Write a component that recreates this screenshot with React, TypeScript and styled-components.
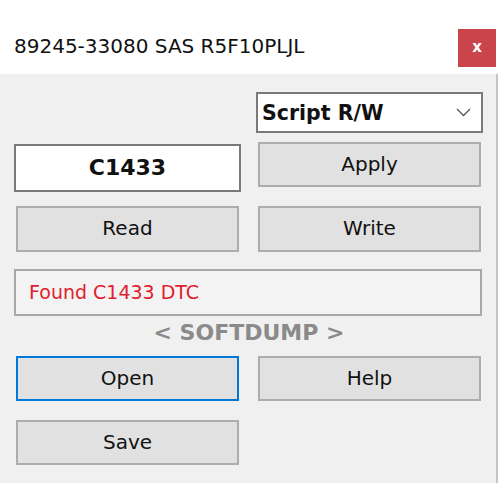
import styled, { createGlobalStyle } from 'styled-components';

const GlobalStyle = createGlobalStyle`
    html, body {
        margin: 0;
        padding: 0;
        background: #ffffff;
    }
    body {
        font-family: 'DejaVu Sans', 'Liberation Sans', sans-serif;
    }
`;

const Window = styled.div`
    width: 498px;
    background: #ffffff;
`;

const TitleBar = styled.div`
    height: 74px;
    display: flex;
    align-items: flex-start;
    justify-content: space-between;
    padding: 29px 2px 0 14px;
    box-sizing: border-box;
`;

const Title = styled.span`
    font-size: 20px;
    color: #111;
    margin-top: 5px;
`;

const CloseButton = styled.button`
    width: 38px;
    height: 38px;
    border: none;
    padding: 0 0 2px;
    background: #c9454b;
    color: #ffffff;
    font-family: 'DejaVu Sans', sans-serif;
    font-weight: bold;
    font-size: 15px;
    display: flex;
    align-items: center;
    justify-content: center;
`;

const Body = styled.div`
    background: #f0f0f0;
    border-right: 2px solid #c4c4c4;
    padding: 0 13px 18px 14px;
    display: flex;
    flex-direction: column;
`;

const Row = styled.div<{ $mt: number }>`
    display: grid;
    grid-template-columns: 227px 227px;
    column-gap: 15px;
    align-items: start;
    margin-top: ${({ $mt }) => $mt}px;
`;

const Button = styled.button<{ $focused?: boolean }>`
    height: 45px;
    margin: 0 2px;
    box-sizing: border-box;
    background: #e1e1e1;
    border: 2px solid ${({ $focused }) => ($focused ? '#0078d7' : '#adadad')};
    font-family: 'DejaVu Sans', sans-serif;
    font-size: 20px;
    color: #111;
    padding: 0 0 2px;
`;

const TallButton = styled(Button)`
    height: 46px;
`;

const Select = styled.div`
    grid-column: 2;
    height: 41px;
    box-sizing: border-box;
    background: #ffffff;
    border: 2px solid #7a7a7a;
    display: flex;
    align-items: center;
    justify-content: space-between;
    padding: 0 10px 0 4px;
    font-weight: bold;
    font-size: 20.5px;
    color: #111;
`;

const CodeInput = styled.div`
    height: 48px;
    margin-top: 2px;
    box-sizing: border-box;
    background: #ffffff;
    border: 2px solid #7a7a7a;
    display: flex;
    align-items: center;
    justify-content: center;
    font-weight: bold;
    font-size: 22px;
    color: #111;
    padding-bottom: 2px;
`;

const Status = styled.div`
    grid-column: 1 / 3;
    width: 468px;
    height: 47px;
    box-sizing: border-box;
    background: #f3f3f3;
    border: 2px solid #a8a8a8;
    display: flex;
    align-items: center;
    padding: 0 0 2px 13px;
    font-size: 19px;
    color: #e0202e;
`;

const Caption = styled.div<{ $mt: number }>`
    margin-top: ${({ $mt }) => $mt}px;
    width: 470px;
    text-align: center;
    font-weight: bold;
    font-size: 22px;
    line-height: 24px;
    color: #8a8a8a;
`;

const Chevron = () => (
    <svg width="15" height="9" viewBox="0 0 15 9">
        <polyline points="1,1 7.5,7.5 14,1" fill="none" stroke="#555" strokeWidth="1.3" />
    </svg>
);

const App = () => {
    return (
        <>
            <GlobalStyle />
            <Window>
                <TitleBar>
                    <Title>89245-33080 SAS R5F10PLJL</Title>
                    <CloseButton>x</CloseButton>
                </TitleBar>
                <Body>
                    <Row $mt={18}>
                        <Select>
                            <span>Script R/W</span>
                            <Chevron />
                        </Select>
                    </Row>
                    <Row $mt={9}>
                        <CodeInput>C1433</CodeInput>
                        <Button>Apply</Button>
                    </Row>
                    <Row $mt={14}>
                        <TallButton>Read</TallButton>
                        <TallButton>Write</TallButton>
                    </Row>
                    <Row $mt={17}>
                        <Status>Found C1433 DTC</Status>
                    </Row>
                    <Caption $mt={5}>&lt; SOFTDUMP &gt;</Caption>
                    <Row $mt={11}>
                        <Button $focused>Open</Button>
                        <Button>Help</Button>
                    </Row>
                    <Row $mt={19}>
                        <Button>Save</Button>
                    </Row>
                </Body>
            </Window>
        </>
    );
};

export default App;
